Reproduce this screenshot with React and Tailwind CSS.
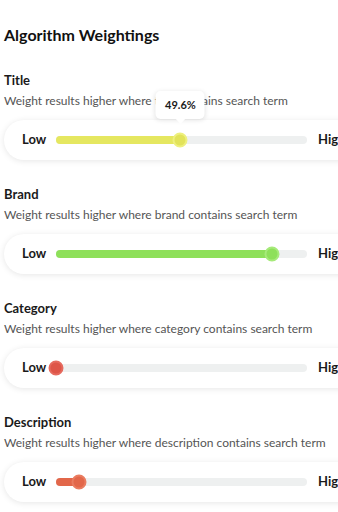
import React from "react";

const sections = [
  { label: "Title", field: "title", value: 49.6, color: "bg-[#e5e760]", thumb: "bg-[#e2e35a]", ring: "border-[#eef07e]", tip: true },
  { label: "Brand", field: "brand", value: 86, color: "bg-[#8ee05a]", thumb: "bg-[#8ee05a]", ring: "border-[#a6ea7a]" },
  { label: "Category", field: "category", value: 0, color: "bg-[#e05a4c]", thumb: "bg-[#de5548]", ring: "border-[#e66a5e]" },
  { label: "Description", field: "description", value: 9, color: "bg-[#e2674a]", thumb: "bg-[#e2674a]", ring: "border-[#ea7c60]" },
];

function Slider({ s }) {
  return (
    <div className="w-[380px] h-[40px] rounded-full bg-white shadow-[0_1px_6px_rgba(0,0,0,0.10)] flex items-center pl-[18px]">
      <span className="text-[13px] font-bold text-[#1a1a1a] w-[26px]">Low</span>
      <div className="relative ml-[8px] w-[251px] h-[8px] rounded-full bg-[#eef0f0]">
        <div className={`absolute left-0 top-0 h-full rounded-full ${s.color}`} style={{ width: `${s.value}%` }} />
        <div
          className={`absolute top-1/2 w-[15px] h-[15px] -translate-x-1/2 -translate-y-1/2 rounded-full border-2 ${s.thumb} ${s.ring}`}
          style={{ left: `${s.value}%` }}
        />
        {s.tip && (
          <div className="absolute bottom-[22px] -translate-x-1/2 flex flex-col items-center" style={{ left: `${s.value}%` }}>
            <div className="w-[49px] h-[28px] rounded-[5px] bg-white shadow-[0_1px_5px_rgba(0,0,0,0.12)] flex items-center justify-center text-[11px] font-bold text-[#1a1a1a]">
              49.6%
            </div>
            <div className="w-[8px] h-[8px] bg-white rotate-45 -mt-[5px]" />
          </div>
        )}
      </div>
      <span className="ml-[11px] text-[13px] font-bold text-[#1a1a1a]">High</span>
    </div>
  );
}

export default function App() {
  return (
    <div className="w-[338px] h-[512px] overflow-hidden bg-white" style={{ fontFamily: "Lato, 'Liberation Sans', sans-serif" }}>
      <div className="px-[4px] pt-[25px]">
        <h1 className="text-[16px] font-bold text-[#111] leading-[20px]">Algorithm Weightings</h1>
        <div className="mt-[26px] flex flex-col gap-[25px]">
          {sections.map((s) => (
            <div key={s.field} className="flex flex-col">
              <div className="text-[13px] font-bold text-[#1a1a1a] leading-[18px]">{s.label}</div>
              <div className="mt-[4px] text-[12px] text-[#555] leading-[16px]">
                Weight results higher where {s.field} contains search term
              </div>
              <div className="mt-[11px]">
                <Slider s={s} />
              </div>
            </div>
          ))}
        </div>
      </div>
    </div>
  );
}
